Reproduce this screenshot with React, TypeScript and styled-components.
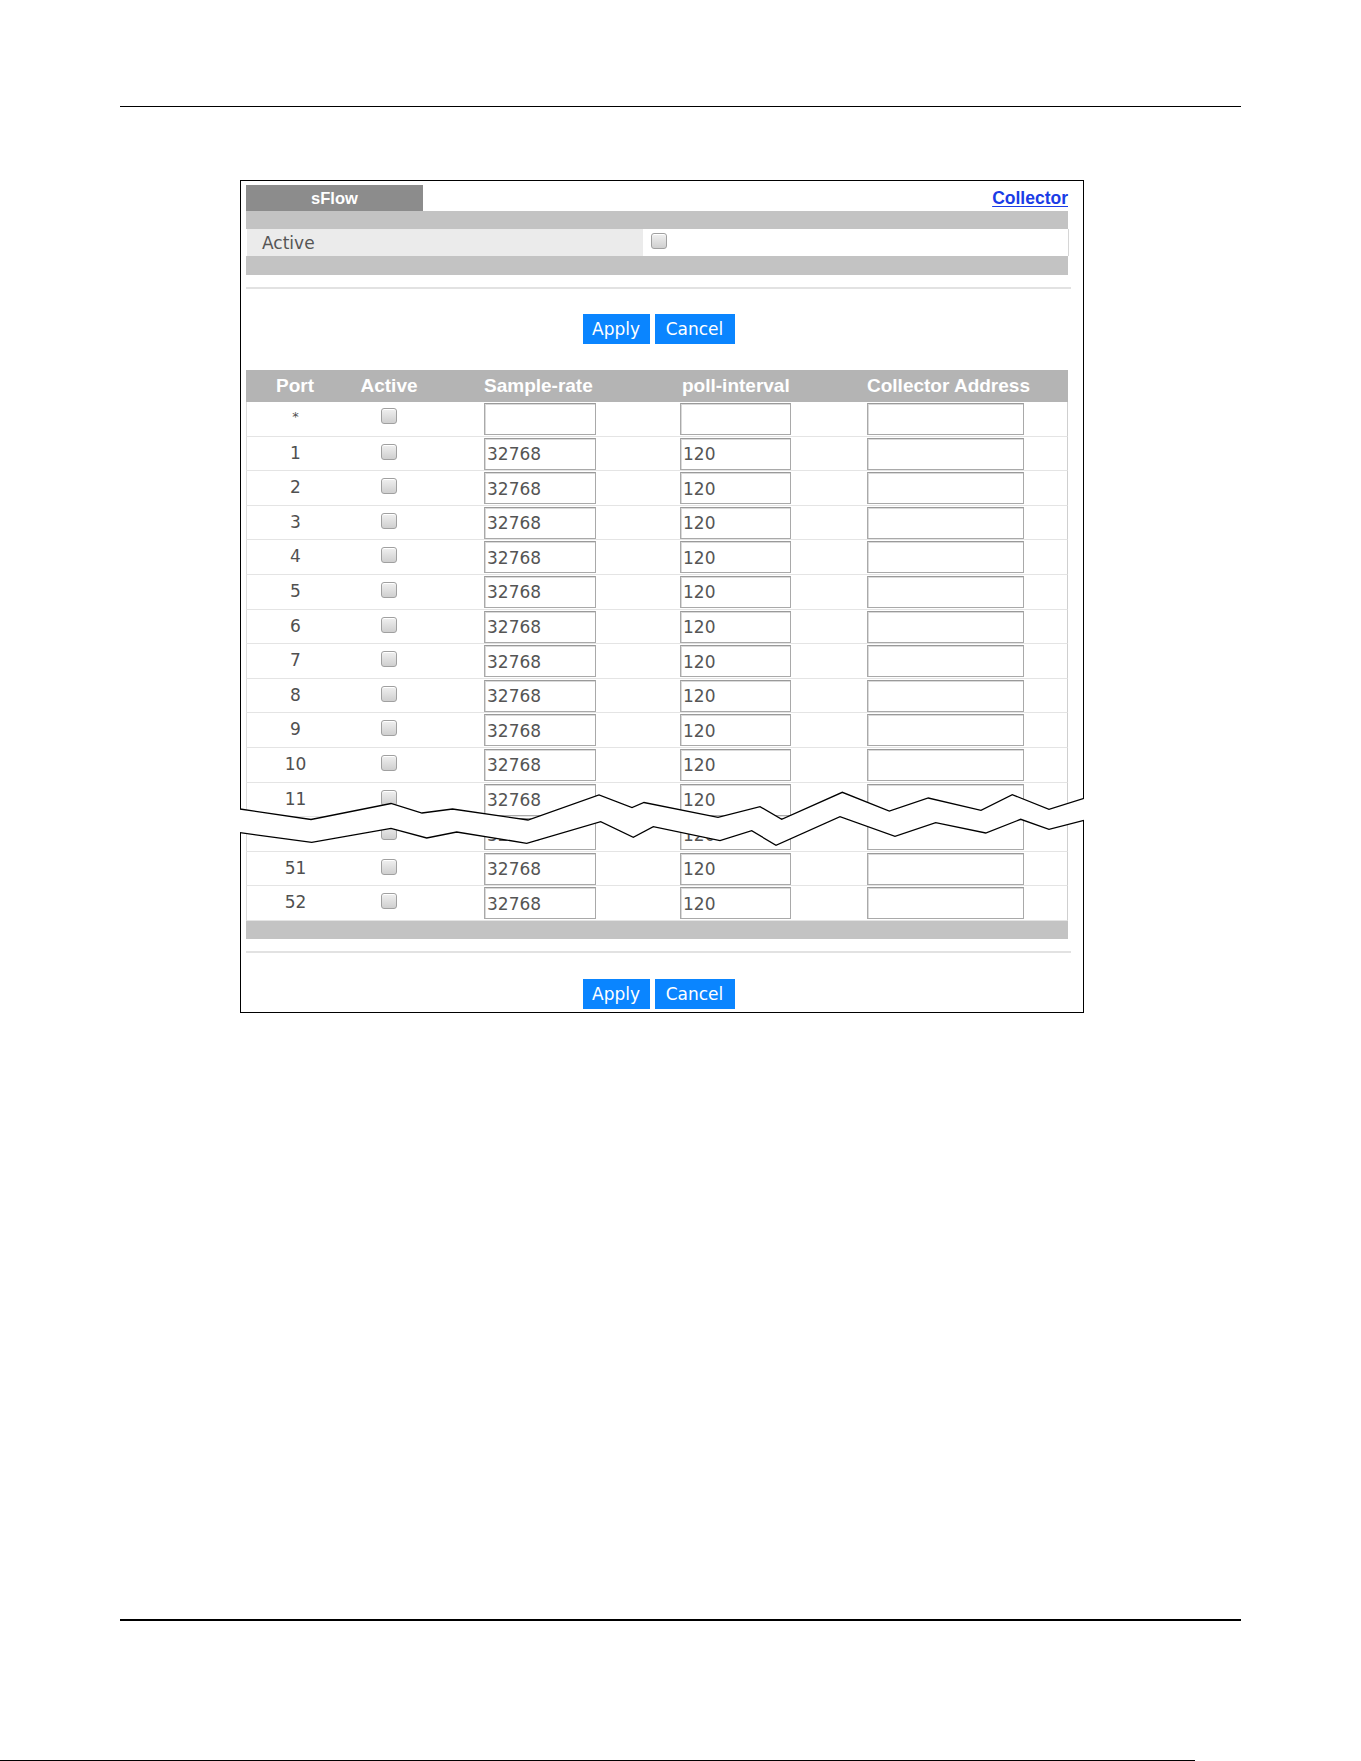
import React from "react";
import styled, { createGlobalStyle } from "styled-components";

const GlobalStyle = createGlobalStyle`
  html, body {
    margin: 0;
    padding: 0;
    background: #ffffff;
  }
  * {
    box-sizing: border-box;
  }
`;

const BODY_FONT = `"DejaVu Sans", "Liberation Sans", sans-serif`;
const BOLD_FONT = `"Liberation Sans", Arial, sans-serif`;

const Page = styled.div`
  position: relative;
  width: 1361px;
  height: 1761px;
  overflow: hidden;
  display: flex;
  flex-direction: column;
  font-family: ${BODY_FONT};
`;

const Rule = styled.div<{ $top: number; $thick: number }>`
  margin-top: ${(p) => p.$top}px;
  margin-left: 120px;
  width: 1121px;
  height: ${(p) => p.$thick}px;
  background: #000;
  flex: none;
`;

const EdgeLine = styled.div`
  margin-top: 139px;
  width: 1195px;
  height: 1px;
  background: #000;
  flex: none;
`;

const Frame = styled.div`
  position: relative;
  flex: none;
  margin-top: 73px;
  margin-left: 240px;
  width: 844px;
  height: 833px;
  border: 1px solid #000;
  padding: 4px 15px 3px 5px;
  display: flex;
  flex-direction: column;
`;

const TabRow = styled.div`
  display: flex;
  align-items: center;
  justify-content: space-between;
  height: 26px;
`;

const Tab = styled.div`
  width: 177px;
  height: 26px;
  background: #8c8c8c;
  color: #fff;
  font-family: ${BOLD_FONT};
  font-weight: bold;
  font-size: 16.5px;
  display: flex;
  align-items: center;
  justify-content: center;
`;

const Link = styled.a`
  font-family: ${BOLD_FONT};
  font-weight: bold;
  font-size: 17.5px;
  color: #1a3ce6;
  text-decoration: underline;
  text-underline-offset: 2px;
  cursor: pointer;
`;

const Band = styled.div<{ $h: number }>`
  height: ${(p) => p.$h}px;
  background: #c3c3c3;
  flex: none;
`;

const SettingRow = styled.div`
  display: grid;
  grid-template-columns: 396px 1fr;
  height: 27px;
  margin-left: 1px;
  margin-right: -1px;
  border-right: 1px solid #d6d6d6;
`;

const SettingLabel = styled.div`
  background: #ebebeb;
  color: #555;
  font-size: 17px;
  padding-left: 15px;
  display: flex;
  align-items: center;
`;

const SettingValue = styled.div`
  background: #fff;
  padding-left: 8px;
  display: flex;
  align-items: flex-start;
  padding-top: 4px;
`;

const Divider = styled.div<{ $top: number }>`
  margin-top: ${(p) => p.$top}px;
  margin-right: -3px;
  height: 2px;
  background: #e2e2e2;
  flex: none;
`;

const ButtonBar = styled.div<{ $top: number }>`
  margin-top: ${(p) => p.$top}px;
  display: flex;
  justify-content: center;
  gap: 5px;
  padding-left: 3px;
  flex: none;
`;

const Button = styled.button<{ $w: number }>`
  width: ${(p) => p.$w}px;
  height: 30px;
  border: none;
  background: #0a85ff;
  color: #fff;
  font-family: ${BODY_FONT};
  font-size: 17px;
  padding: 0;
  cursor: pointer;
`;

const Table = styled.div`
  margin-top: 26px;
  display: grid;
  grid-template-columns: 98px 90px 246px 187px 1fr;
  grid-template-rows: 32px;
  grid-auto-rows: 34.6px;
  flex: none;
`;

const HeadCell = styled.div<{ $center?: boolean; $pad?: number }>`
  background: #b4b4b4;
  color: #fff;
  font-family: ${BOLD_FONT};
  font-weight: bold;
  font-size: 19px;
  white-space: nowrap;
  display: flex;
  align-items: center;
  justify-content: ${(p) => (p.$center ? "center" : "flex-start")};
  padding-left: ${(p) => p.$pad ?? 0}px;
  padding-bottom: 1px;
`;

const Cell = styled.div<{ $center?: boolean; $pad?: number; $first?: boolean; $last?: boolean }>`
  display: flex;
  align-items: flex-start;
  justify-content: ${(p) => (p.$center ? "center" : "flex-start")};
  padding-left: ${(p) => p.$pad ?? 0}px;
  padding-top: 1px;
  border-bottom: 1.5px solid #e4e4e4;
  border-left: ${(p) => (p.$first ? "1px solid #dcdcdc" : "none")};
  border-right: ${(p) => (p.$last ? "1px solid #cfcfcf" : "none")};
  background: #fff;
`;

const PortLabel = styled.span<{ $star?: boolean }>`
  color: #505050;
  font-size: ${(p) => (p.$star ? 13 : 17)}px;
  line-height: 1;
  margin-top: ${(p) => (p.$star ? 7 : 7)}px;
`;

const Check = styled.input.attrs({ type: "checkbox" })<{ $top?: number }>`
  appearance: none;
  -webkit-appearance: none;
  margin: ${(p) => p.$top ?? 5}px 0 0 0;
  width: 16px;
  height: 16px;
  border: 1px solid #a0a0a0;
  border-radius: 3px;
  background: linear-gradient(#f0f0f0, #cfcfcf);
  box-shadow: inset 0 1px 0 #ffffff;
  flex: none;
`;

const Field = styled.input<{ $w: number }>`
  width: ${(p) => p.$w}px;
  height: 32px;
  border: 1px solid #a9a9a9;
  border-top-color: #9a9a9a;
  box-shadow: inset 1px 1px 0 #dadada;
  padding: 1px 0 0 2px;
  font-family: ${BODY_FONT};
  font-size: 17px;
  color: #555;
  background: #fff;
  outline: none;
`;

const BreakMark = styled.svg`
  position: absolute;
  left: -1px;
  top: 599px;
  width: 844px;
  height: 80px;
  pointer-events: none;
`;

const upper: [number, number][] = [
  [240, 809], [311, 819.5], [391, 803.5], [422, 813], [452.5, 809], [528, 820],
  [599, 795], [632, 807.5], [644, 802.5], [718, 817.3], [760, 806.7], [781.7, 819.3],
  [842.3, 792.3], [889.3, 811], [928.3, 798], [981, 810.3], [1012.3, 794.7],
  [1049, 809.3], [1084, 798.3],
];

const lower: [number, number][] = [
  [240, 832.7], [311.7, 842.3], [391, 828.3], [426.7, 838], [456.7, 832],
  [526.7, 843.3], [600.7, 821.7], [633.3, 837.3], [653.3, 826.7], [720, 840.7],
  [751.7, 830.7], [776, 845.3], [840, 816.7], [895, 836.3], [935.7, 822.7],
  [985.7, 833], [1020.7, 819.3], [1049, 829.3], [1084, 820.3],
];

const pts = (list: [number, number][]) => list.map(([x, y]) => `${x},${y}`).join(" ");

const ports = ["*", "1", "2", "3", "4", "5", "6", "7", "8", "9", "10", "11", "50", "51", "52"];

function PortRow({ port }: { port: string }) {
  const star = port === "*";
  return (
    <>
      <Cell $center $first>
        <PortLabel $star={star}>{port}</PortLabel>
      </Cell>
      <Cell $center>
        <Check $top={star ? 5 : 6} />
      </Cell>
      <Cell $pad={50}>
        <Field $w={112} defaultValue={star ? "" : "32768"} />
      </Cell>
      <Cell>
        <Field $w={111} defaultValue={star ? "" : "120"} />
      </Cell>
      <Cell $pad={0} $last>
        <Field $w={157} defaultValue="" />
      </Cell>
    </>
  );
}

export default function App() {
  return (
    <>
      <GlobalStyle />
      <Page>
        <Rule $top={106} $thick={1} />
        <Frame>
          <TabRow>
            <Tab>sFlow</Tab>
            <Link>Collector</Link>
          </TabRow>
          <Band $h={18} />
          <SettingRow>
            <SettingLabel>Active</SettingLabel>
            <SettingValue>
              <Check $top={0} />
            </SettingValue>
          </SettingRow>
          <Band $h={19} />
          <Divider $top={12} />
          <ButtonBar $top={25}>
            <Button $w={67}>Apply</Button>
            <Button $w={80}>Cancel</Button>
          </ButtonBar>
          <Table>
            <HeadCell $center>Port</HeadCell>
            <HeadCell $center>Active</HeadCell>
            <HeadCell $pad={50}>Sample-rate</HeadCell>
            <HeadCell $pad={2}>poll-interval</HeadCell>
            <HeadCell>Collector Address</HeadCell>
            {ports.map((p) => (
              <PortRow key={p} port={p} />
            ))}
          </Table>
          <Band $h={18} />
          <Divider $top={12} />
          <ButtonBar $top={26}>
            <Button $w={67}>Apply</Button>
            <Button $w={80}>Cancel</Button>
          </ButtonBar>
          <BreakMark viewBox="240 780 844 80">
            <polygon points={`${pts(upper)} ${pts([...lower].reverse())}`} fill="#fff" />
            <polyline points={pts(upper)} fill="none" stroke="#000" strokeWidth={1.3} />
            <polyline points={pts(lower)} fill="none" stroke="#000" strokeWidth={1.3} />
          </BreakMark>
        </Frame>
        <Rule $top={606} $thick={2} />
        <EdgeLine />
      </Page>
    </>
  );
}
